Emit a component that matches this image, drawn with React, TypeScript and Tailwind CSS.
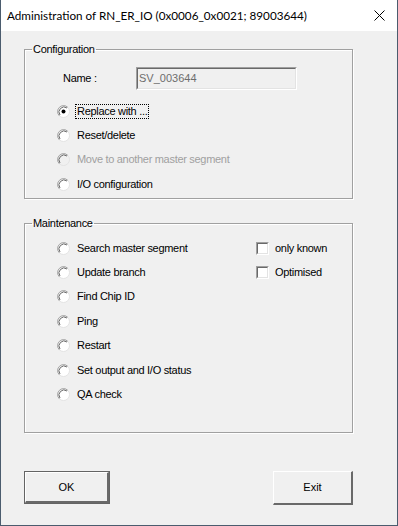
import { ReactNode } from "react";

const font = { fontFamily: '"Liberation Sans", Arial, sans-serif' };

const Radio = ({ checked, disabled }: { checked?: boolean; disabled?: boolean }) => (
  <svg width="13" height="13" viewBox="0 0 13 13" className="shrink-0 block">
    <circle cx="6.5" cy="6.5" r="6" fill={disabled ? "#f0f0f0" : "#ffffff"} stroke="#e3e3e3" strokeWidth="1" />
    <path d="M2.26 10.74 A6 6 0 0 1 10.74 2.26" fill="none" stroke="#a0a0a0" strokeWidth="1" />
    <path d="M3 10 A5 5 0 0 1 10 3" fill="none" stroke="#696969" strokeWidth="1" />
    {checked && <circle cx="6.5" cy="6.5" r="2" fill="#000000" />}
  </svg>
);

const Check = () => (
  <div className="w-[13px] h-[13px] shrink-0 bg-white border-t border-l border-t-[#a0a0a0] border-l-[#a0a0a0] border-b border-r border-b-white border-r-white">
    <div className="w-full h-full border-t border-l border-t-[#696969] border-l-[#696969] border-b border-r border-b-[#e3e3e3] border-r-[#e3e3e3]" />
  </div>
);

const RadioRow = ({
  label,
  checked,
  disabled,
  focused,
}: {
  label: string;
  checked?: boolean;
  disabled?: boolean;
  focused?: boolean;
}) => (
  <div className="h-[24.4px] flex items-center pl-[32px]">
    <Radio checked={checked} disabled={disabled} />
    <span
      className={
        "ml-[5px] text-[11px] leading-[13px] px-[1px] tracking-[-0.3px] " +
        (disabled ? "text-[#a0a0a0]" : "text-black") +
        (focused ? " border border-dotted border-black" : " border border-transparent")
      }
    >
      {label}
    </span>
  </div>
);

const Group = ({ title, className, children }: { title: string; className: string; children: ReactNode }) => (
  <fieldset className={"border border-[#a0a0a0] shadow-[inset_1px_1px_0_#ffffff,1px_1px_0_#ffffff] " + className}>
    <legend className="ml-[7px] px-[1px] text-[11px] leading-[13px] tracking-[-0.3px] text-black">{title}</legend>
    {children}
  </fieldset>
);

const Button = ({ label, isDefault, className }: { label: string; isDefault?: boolean; className: string }) => (
  <div className={(isDefault ? "border border-[#646464] " : "") + className}>
    <div className="w-full h-full border-t border-l border-t-white border-l-white border-b-2 border-r-2 border-b-[#696969] border-r-[#696969] flex items-center justify-center text-[11px] text-black">
      {label}
    </div>
  </div>
);

export default function App() {
  return (
    <div className="w-[398px] h-[526px] flex flex-col bg-[#f0f0f0] border-x border-b border-[#4b5c6e]" style={font}>
      <div className="h-[31px] shrink-0 bg-white flex items-center pl-[6px] pr-[12px]">
        <span className="text-[11.7px] text-black flex-1 pt-[1px]" style={{ fontFamily: 'Lato, "Liberation Sans", sans-serif' }}>
          Administration of RN_ER_IO (0x0006_0x0021; 89003644)
        </span>
        <svg width="11" height="11" viewBox="0 0 11 11">
          <path d="M0.5 0.5 L10.5 10.5 M10.5 0.5 L0.5 10.5" stroke="#000" strokeWidth="1" />
        </svg>
      </div>

      <div className="flex flex-col pl-[23px] pr-[44px] pt-[12px]">
        <Group title="Configuration" className="h-[156px]">
          <div className="flex items-center h-[24px] mt-[10px]">
            <span className="pl-[38px] w-[111px] text-[11px] text-black tracking-[-0.3px]">Name :</span>
            <div className="w-[161px] h-[23px] border-t border-l border-t-[#a0a0a0] border-l-[#a0a0a0] border-b border-r border-b-white border-r-white">
              <div className="w-full h-full border-t border-l border-t-[#696969] border-l-[#696969] border-b border-r border-b-[#e3e3e3] border-r-[#e3e3e3] flex items-center pl-[1px] text-[11px] text-[#6d6d6d]">
                SV_003644
              </div>
            </div>
          </div>
          <div className="flex flex-col mt-[9px]">
            <RadioRow label="Replace with ..." checked focused />
            <RadioRow label="Reset/delete" />
            <RadioRow label="Move to another master segment" disabled />
            <RadioRow label="I/O configuration" />
          </div>
        </Group>

        <Group title="Maintenance" className="h-[216px] mt-[18px]">
          <div className="flex mt-[6px]">
            <div className="flex flex-col w-[231px]">
              <RadioRow label="Search master segment" />
              <RadioRow label="Update branch" />
              <RadioRow label="Find Chip ID" />
              <RadioRow label="Ping" />
              <RadioRow label="Restart" />
              <RadioRow label="Set output and I/O status" />
              <RadioRow label="QA check" />
            </div>
            <div className="flex flex-col">
              <div className="h-[24.4px] flex items-center">
                <Check />
                <span className="ml-[6px] text-[11px] text-black tracking-[-0.3px]">only known</span>
              </div>
              <div className="h-[24.4px] flex items-center">
                <Check />
                <span className="ml-[6px] text-[11px] text-black tracking-[-0.3px]">Optimised</span>
              </div>
            </div>
          </div>
        </Group>

        <div className="flex justify-between mt-[38px]">
          <Button label="OK" isDefault className="w-[86px] h-[33px]" />
          <Button label="Exit" className="w-[80px] h-[34px]" />
        </div>
      </div>
    </div>
  );
}
